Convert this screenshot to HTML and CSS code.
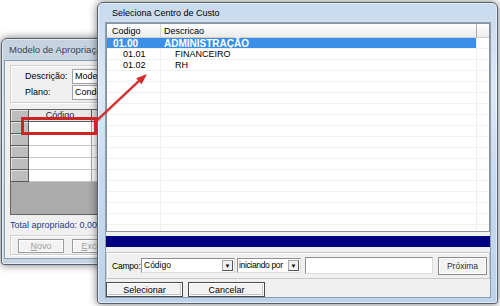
FILE: index.html
```html
<!DOCTYPE html>
<html lang="pt-BR">
<head>
    <meta charset="UTF-8">
    <meta name="viewport" content="width=device-width, initial-scale=1.0">
    <title>Seleciona Centro de Custo</title>
    <link rel="stylesheet" href="styles.css">
</head>
<body>
    <div class="desktop">

        <!-- janela de fundo -->
        <section class="win win-back">
            <div class="win-title">Modelo de Apropriação</div>
            <div class="win-client">
                <div class="box box-head">
                    <div class="field"><span class="lbl">Descrição:</span><span class="input">Modelo</span></div>
                    <div class="field"><span class="lbl">Plano:</span><span class="input">Condominio</span></div>
                </div>
                <div class="dbgrid">
                    <div class="dbrow dbhead"><span class="ind"></span><span class="dbcell">Código</span><span class="dbcell"></span></div>
                    <div class="dbrow"><span class="ind"></span><span class="dbcell"></span><span class="dbcell"></span></div>
                    <div class="dbrow"><span class="ind"></span><span class="dbcell"></span><span class="dbcell"></span></div>
                    <div class="dbrow"><span class="ind"></span><span class="dbcell"></span><span class="dbcell"></span></div>
                    <div class="dbrow"><span class="ind"></span><span class="dbcell"></span><span class="dbcell"></span></div>
                    <div class="dbrow"><span class="ind"></span><span class="dbcell"></span><span class="dbcell"></span></div>
                </div>
                <div class="total">Total apropriado: 0,0000</div>
                <div class="box box-buttons">
                    <button class="btn" disabled><u>N</u>ovo</button>
                    <button class="btn" disabled><u>E</u>xcluir</button>
                </div>
            </div>
        </section>

        <!-- dialogo -->
        <section class="win win-dialog">
            <div class="win-title">Seleciona Centro de Custo</div>
            <div class="win-client">
                <div class="grid">
                    <div class="row head"><span class="c-cod">Codigo</span><span class="c-desc">Descricao</span><span class="c-end"></span></div>
                    <div class="row selected"><span class="c-cod">01.00</span><span class="c-desc">ADMINISTRAÇÃO</span><span class="c-end"></span></div>
                    <div class="row"><span class="c-cod sub">01.01</span><span class="c-desc sub">FINANCEIRO</span><span class="c-end"></span></div>
                    <div class="row"><span class="c-cod sub">01.02</span><span class="c-desc sub">RH</span><span class="c-end"></span></div>
                    <div class="row"><span class="c-cod"></span><span class="c-desc"></span><span class="c-end"></span></div>
                    <div class="row"><span class="c-cod"></span><span class="c-desc"></span><span class="c-end"></span></div>
                    <div class="row"><span class="c-cod"></span><span class="c-desc"></span><span class="c-end"></span></div>
                    <div class="row"><span class="c-cod"></span><span class="c-desc"></span><span class="c-end"></span></div>
                    <div class="row"><span class="c-cod"></span><span class="c-desc"></span><span class="c-end"></span></div>
                    <div class="row"><span class="c-cod"></span><span class="c-desc"></span><span class="c-end"></span></div>
                    <div class="row"><span class="c-cod"></span><span class="c-desc"></span><span class="c-end"></span></div>
                    <div class="row"><span class="c-cod"></span><span class="c-desc"></span><span class="c-end"></span></div>
                    <div class="row"><span class="c-cod"></span><span class="c-desc"></span><span class="c-end"></span></div>
                    <div class="row"><span class="c-cod"></span><span class="c-desc"></span><span class="c-end"></span></div>
                    <div class="row"><span class="c-cod"></span><span class="c-desc"></span><span class="c-end"></span></div>
                    <div class="row"><span class="c-cod"></span><span class="c-desc"></span><span class="c-end"></span></div>
                    <div class="row"><span class="c-cod"></span><span class="c-desc"></span><span class="c-end"></span></div>
                    <div class="row"><span class="c-cod"></span><span class="c-desc"></span><span class="c-end"></span></div>
                    <div class="row"><span class="c-cod"></span><span class="c-desc"></span><span class="c-end"></span></div>
                </div>
                <div class="statusbar"></div>
                <div class="search">
                    <span class="lbl">Campo:</span>
                    <span class="combo combo-field">Código<span class="drop">&#9660;</span></span>
                    <span class="combo combo-mode">iniciando por<span class="drop">&#9660;</span></span>
                    <span class="edit"></span>
                    <button class="btn btn-next">Próxima</button>
                </div>
                <div class="actions">
                    <button class="btn btn-act">Selecionar</button>
                    <button class="btn btn-act">Cancelar</button>
                </div>
            </div>
        </section>

        <div class="callout"></div>
        <svg class="arrow" width="500" height="306" viewBox="0 0 500 306">
            <line x1="97" y1="121" x2="140" y2="80" stroke="#8a1010" stroke-opacity="0.35" stroke-width="3"/>
            <line x1="96" y1="121" x2="140" y2="80" stroke="#d42a2a" stroke-width="1.8"/>
            <polygon points="147,74 141.6,84.2 136.2,78.3" fill="#d42a2a"/>
        </svg>
    </div>
</body>
</html>
```

FILE: styles.css
```css
* {
    box-sizing: border-box;
}
body {
    margin: 0;
    background: #fff;
    font-family: 'Liberation Sans', Arial, sans-serif;
    font-size: 9px;
    color: #000;
}
.desktop {
    position: relative;
    width: 500px;
    height: 306px;
    overflow: hidden;
    background: #fff;
}

/* janelas aero */
.win {
    position: absolute;
    display: flex;
    flex-direction: column;
    border: 1px solid #56616e;
    border-radius: 6px 6px 3px 3px;
    background: linear-gradient(180deg, #c8daee 0%, #dce8f5 30%, #c6d9ee 60%, #bed3ea 100%);
    box-shadow: inset 0 0 0 1px rgba(255,255,255,0.55), 0 0 8px rgba(0,0,0,0.55);
}
.win-title {
    height: 21px;
    line-height: 21px;
    padding-left: 6px;
    font-size: 9.5px;
    white-space: nowrap;
    overflow: hidden;
}
.win-client {
    flex: 1;
    background: #f0f0f0;
    border: 1px solid #8b9db2;
}

/* janela de fundo */
.win-back {
    left: 1px;
    top: 38px;
    width: 150px;
    height: 227px;
    padding: 0 2px 5px 2px;
    background: linear-gradient(180deg, #c4d2df 0%, #d3dee9 40%, #c6d3e0 100%);
}
.win-back .win-title {
    color: #3c4654;
    padding-left: 5px;
}
.win-back .win-client {
    padding: 4px 0 0 5px;
}
.box {
    border: 1px solid #d0d0d0;
    box-shadow: inset 1px 1px 0 #fff, 1px 1px 0 #fff;
}
.box-head {
    height: 38px;
    padding: 2px 0 0 14px;
}
.field {
    display: flex;
    align-items: center;
    height: 16px;
}
.field .lbl {
    width: 47px;
    color: #000;
}
.input {
    flex: 1;
    height: 15px;
    line-height: 13px;
    padding-left: 2px;
    background: #fff;
    border: 1px solid #a0a0a0;
    border-right: none;
    white-space: nowrap;
    overflow: hidden;
}
.dbgrid {
    margin-top: 6px;
    height: 106px;
    background: #ababab;
    border: 1px solid #646464;
    border-right: none;
}
.dbrow {
    display: flex;
    height: 12px;
}
.dbrow .ind {
    width: 18px;
    background: #bdbdbd;
    border-right: 1px solid #5a5a5a;
    border-bottom: 1px solid #5a5a5a;
    box-shadow: inset 1px 1px 0 #e4e4e4;
}
.dbrow .dbcell {
    width: 63px;
    background: #fff;
    border-right: 1px solid #a8a8a8;
    border-bottom: 1px solid #c8c8c8;
}
.dbrow .dbcell + .dbcell {
    flex: 1;
}
.dbhead .dbcell {
    background: #e8e8e8;
    border-right: 1px solid #5a5a5a;
    border-bottom: 1px solid #5a5a5a;
    text-align: center;
    line-height: 11px;
    color: #222;
}
.total {
    margin-top: 5px;
    height: 11px;
    line-height: 11px;
    color: #283a8c;
    white-space: nowrap;
}
.box-buttons {
    margin-top: 4px;
    height: 20px;
    display: flex;
    gap: 8px;
    padding: 3px 0 0 7px;
}
.btn {
    font: inherit;
    height: 14px;
    padding: 0;
    background: #f2f2f2;
    border: 1px solid #9a9a9a;
    color: #000;
}
.box-buttons .btn {
    width: 46px;
    color: #a0a0a0;
    box-shadow: inset 0 0 0 1px #fff;
}

/* dialogo */
.win-dialog {
    left: 97px;
    top: 2px;
    width: 401px;
    height: 302px;
    padding: 0 6px 5px 7px;
}
.win-dialog .win-title {
    color: #000;
    padding-left: 7px;
    font-size: 9px;
}
.win-dialog .win-client {
    display: flex;
    flex-direction: column;
}
.grid {
    height: 209px;
    overflow: hidden;
    background: #fff;
    border: 1px solid #8c939c;
}
.row {
    display: flex;
    height: 11px;
    line-height: 11px;
    border-bottom: 1px solid #f1f1f1;
    white-space: nowrap;
}
.row .c-cod {
    width: 54px;
    padding-left: 7px;
    border-right: 1px solid #f0f0f0;
}
.row .c-desc {
    flex: 1;
    padding-left: 3px;
    border-right: 1px solid #ededed;
}
.row .c-end {
    width: 12px;
}
.row .sub {
    padding-left: 16px;
}
.row .c-desc.sub {
    padding-left: 14px;
}
.row.head {
    height: 14px;
    line-height: 14px;
    background: linear-gradient(180deg, #fff 0%, #f3f3f3 60%, #ececec 100%);
    border-bottom: 1px solid #cfcfcf;
}
.row.head .c-cod {
    padding-left: 5px;
    border-right: 1px solid #d8d8d8;
}
.row.head .c-desc {
    border-right: 1px solid #aaa;
}
.row.selected .c-cod,
.row.selected .c-desc {
    background: #3b8fe6;
    color: #fff;
    font-weight: bold;
    font-size: 10px;
}
.row.selected .c-cod {
    padding-left: 6px;
    border-right-color: #3b8fe6;
}
.statusbar {
    margin-top: 4px;
    height: 11px;
    background: #000080;
}
.search {
    margin-top: 5px;
    height: 27px;
    display: flex;
    align-items: center;
    padding: 0 5px;
    font-size: 8.5px;
    border: 1px solid #c8c8c8;
    box-shadow: inset 1px 1px 0 #fff;
}
.search > * {
    flex: none;
}
.search .lbl {
    width: 29px;
    white-space: nowrap;
    letter-spacing: -0.2px;
}
.combo {
    position: relative;
    height: 15px;
    line-height: 13px;
    padding-left: 2px;
    background: #fff;
    white-space: nowrap;
    overflow: hidden;
    border: 1px solid #8e8e8e;
    border-right-color: #dcdcdc;
    border-bottom-color: #dcdcdc;
}
.combo-field {
    width: 94px;
}
.combo-mode {
    width: 64px;
    margin-left: 2px;
    padding-left: 1px;
    letter-spacing: -0.35px;
}
.drop {
    position: absolute;
    right: 1px;
    top: 1px;
    width: 11px;
    height: 11px;
    line-height: 11px;
    font-size: 6px;
    letter-spacing: 0;
    text-align: center;
    background: #f0f0f0;
    border: 1px solid #a8a8a8;
    border-bottom-color: #555;
    border-right-color: #555;
}
.edit {
    width: 128px;
    height: 17px;
    margin-left: 4px;
    background: #fff;
    border: 1px solid #8e8e8e;
    border-right-color: #dcdcdc;
    border-bottom-color: #dcdcdc;
}
.btn-next {
    width: 49px;
    height: 18px;
    margin-left: 5px;
    border-color: #8a8a8a;
    box-shadow: inset 0 0 0 1px #fff;
    color: #333;
}
.actions {
    margin-top: 3px;
    display: flex;
    gap: 5px;
}
.btn-act {
    width: 77px;
    height: 15px;
    border: 1px solid #4a4a4a;
    box-shadow: inset 0 0 0 1px #fff, inset -1px -1px 0 1px #c4c4c4;
}

/* destaque */
.callout {
    position: absolute;
    left: 21px;
    top: 117px;
    width: 76px;
    height: 18px;
    border: 3px solid #cf2424;
}
.arrow {
    position: absolute;
    left: 0;
    top: 0;
    pointer-events: none;
}
```
